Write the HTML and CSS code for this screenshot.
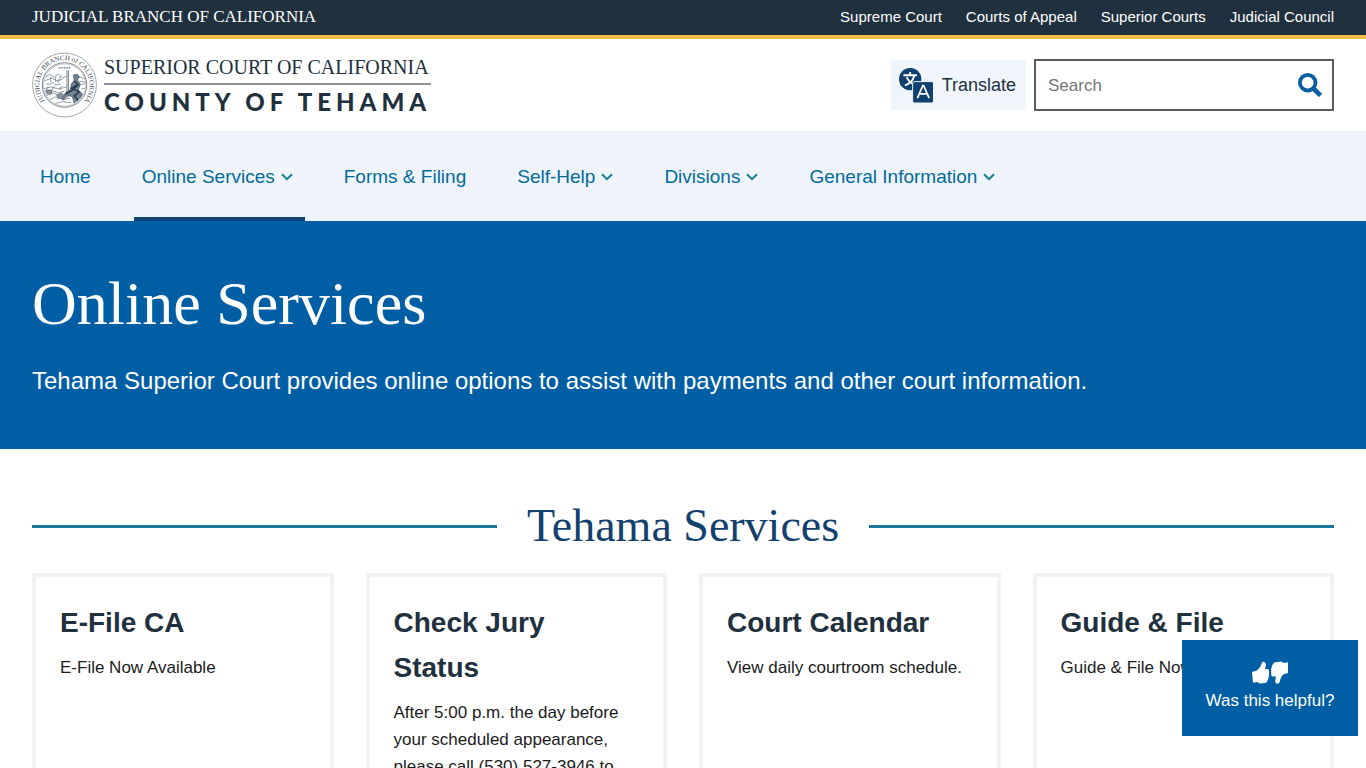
FILE: index.html
```html
<!DOCTYPE html>
<html lang="en">
<head>
<meta charset="utf-8">
<meta name="viewport" content="width=device-width, initial-scale=1">
<title>Online Services | Superior Court of California | County of Tehama</title>
<link rel="stylesheet" href="styles.css">
</head>
<body>
<div class="topbar">
  <a class="topbar-brand" href="#">JUDICIAL BRANCH OF CALIFORNIA</a>
  <nav class="topbar-links" aria-label="Branch links">
    <a href="#">Supreme Court</a>
    <a href="#">Courts of Appeal</a>
    <a href="#">Superior Courts</a>
    <a href="#">Judicial Council</a>
  </nav>
</div>

<header class="header">
  <a class="logo" href="#">
    <svg class="seal" viewBox="0 0 66 66" aria-hidden="true">
      <defs><path id="ring" d="M14.200 50.500A25.500 25.500 0 1 1 51.800 50.500"/><clipPath id="disc"><circle cx="33" cy="33" r="21"/></clipPath></defs>
      <circle cx="33" cy="33" r="32.400" fill="#fff" stroke="#88929b" stroke-width=".8"/>
      <text class="seal-text"><textPath href="#ring" startOffset="50%" text-anchor="middle">JUDICIAL BRANCH of CALIFORNIA</textPath></text>
      <circle cx="33" cy="33" r="22.600" fill="none" stroke="#5d6872" stroke-width=".8"/>
      <circle cx="33" cy="33" r="21.400" fill="none" stroke="#89939b" stroke-width=".5"/>
      <g clip-path="url(#disc)" fill="none" stroke="#60707d" stroke-width=".7">
        <path d="M27 15.500h12" stroke-dasharray="1 .8" stroke-width="1.600"/>
        <path d="M12 26l6-4 4 3 5-3 4 4 4-2M12 29l8-3 6 3 5-2M14 32h5l2-2 3 3 5-1M11 37l8-2 8 2 8-2M12 40l9-1 7 2 5-2M14 44l8-3 6 3 5-2M18 48l6-3 8 3 7-2M23 52l8-2 9 1M46 24l8 3M48 29l6 1M49 33l6-2M50 37l5-1M50 43l4-2M19 25v5M24 25v5M29 24l-3 7M16 35l-2 4M23 34l-3 4M30 34l-2 4"/>
        <path d="M35.500 18v29M37 18v27" stroke="#3d4e5e"/>
        <path d="M42 23l4-1 2 3-2 3 3 4-2 6 4 4-3 9-5 1-2-7-5-2-4 5-2-1 5-7 4-2 1-6 3-4z" fill="#758391" stroke="#30465b"/>
        <path d="M43 29l4 4-5 4 6 3-5 4 4 5M39 37l7-4M34 42l8-4" stroke="#203850" stroke-width="1.500"/>
        <path d="M15 38h5v4h-5zM25 43l5-2 2 4-5 2z" fill="#87939d"/>
      </g>
    </svg>
    <span class="logo-words">
      <span class="logo-court">SUPERIOR COURT OF CALIFORNIA</span>
      <span class="logo-county">COUNTY OF TEHAMA</span>
    </span>
  </a>
  <div class="tools">
    <button class="translate" type="button">
      <svg viewBox="0 0 36 36" aria-hidden="true">
        <circle cx="11.500" cy="11.500" r="11.500" fill="#10406f"/>
        <path d="M4.500 7.500h14M11.500 4v3.500M15.500 8.500C14.500 12.500 11 16 6 18M8 9.500c1.500 4 5 6.500 8 8" fill="none" stroke="#fff" stroke-width="1.900"/>
        <rect x="14" y="14" width="21.500" height="22" rx="2" fill="#10406f" stroke="#eff5fb" stroke-width="1"/>
        <path d="M19 31l5.500-13h.8L31 31M21 26.500h8" fill="none" stroke="#fff" stroke-width="1.800"/>
      </svg>
      <span>Translate</span>
    </button>
    <form class="search" role="search">
      <input type="search" placeholder="Search" aria-label="Search">
      <button type="submit" aria-label="Submit search">
        <svg viewBox="0 0 24 24" aria-hidden="true"><circle cx="9.700" cy="9.700" r="7.800" fill="none" stroke="#0b5ea1" stroke-width="3.800"/><path d="M15.500 15.500l7 7" stroke="#0b5ea1" stroke-width="4.600"/></svg>
      </button>
    </form>
  </div>
</header>

<nav class="mainnav" aria-label="Main">
  <a href="#">Home</a>
  <a class="current" href="#" aria-current="page">Online Services <svg viewBox="0 0 12 8" aria-hidden="true"><path d="M1 1.200l5 5 5-5"/></svg></a>
  <a href="#">Forms &amp; Filing</a>
  <a href="#">Self-Help <svg viewBox="0 0 12 8" aria-hidden="true"><path d="M1 1.200l5 5 5-5"/></svg></a>
  <a href="#">Divisions <svg viewBox="0 0 12 8" aria-hidden="true"><path d="M1 1.200l5 5 5-5"/></svg></a>
  <a href="#">General Information <svg viewBox="0 0 12 8" aria-hidden="true"><path d="M1 1.200l5 5 5-5"/></svg></a>
</nav>

<main>
  <section class="hero">
    <h1>Online Services</h1>
    <p>Tehama Superior Court provides online options to assist with payments and other court information.</p>
  </section>
  <section class="services">
    <h2>Tehama Services</h2>
    <div class="cards">
      <article class="card"><h3>E-File CA</h3><p>E-File Now Available</p></article>
      <article class="card"><h3>Check Jury Status</h3><p>After 5:00 p.m. the day before your scheduled appearance, please call (530) 527-3946 to</p></article>
      <article class="card"><h3>Court Calendar</h3><p>View daily courtroom schedule.</p></article>
      <article class="card"><h3>Guide &amp; File</h3><p>Guide &amp; File Now</p></article>
    </div>
  </section>
</main>

<button class="feedback" type="button">
  <svg viewBox="0 0 38 24" aria-hidden="true">
    <path d="M1 11l5-1.500Q10 6 11 1.500 14-.5 15 3.500L14 8h3q1.500 1 .8 3 .8 1.500 0 3 .5 1.500-.5 3 .2 2-1 2.800-.3 2-2 2.200L9 22.500 6 21l-4 .7z"/>
    <path d="M37 12l-5 1.500Q29 17 28.500 21.500 25.500 24.500 24 20.500L25 15.500h-3.500q-2-1-1-3-1-1.500 0-3-1-1.500.3-3Q20.500 4 22 3.300 22.500 1.300 24.500 1.200L30 .5 33 2l4-.7z"/>
  </svg>
  <span>Was this helpful?</span>
</button>
</body>
</html>
```
FILE: styles.css
```css
* { box-sizing: border-box; }
body {
  margin: 0;
  background: #fff;
  color: #1b1b1b;
  font: 17px/27px "Liberation Sans", Arial, sans-serif;
}
html { scrollbar-width: none; }
a { color: inherit; text-decoration: none; }
button, input { font: inherit; }
h1, h2, h3, p { margin: 0; }

.topbar {
  display: flex;
  justify-content: space-between;
  align-items: center;
  padding: 3px 32px 5px;
  background: #1f303e;
  border-bottom: 4px solid #f3bd48;
  color: #fff;
}
.topbar-brand { font: 17px/26px "Liberation Serif", serif; }
.topbar-links { display: flex; gap: 24px; font-size: 15px; }

.header {
  display: flex;
  justify-content: space-between;
  align-items: center;
  padding: 12px 32px;
}
.logo { display: flex; align-items: center; gap: 7px; color: #21303d; }
.seal { width: 65px; height: 66px; }
.seal-text { font: 7px "Liberation Serif", serif; fill: #3f4b56; }
.logo-words { display: flex; flex-direction: column; }
.logo-court {
  font: 20px/32px "Liberation Serif", serif;
  border-bottom: 2px solid #8c939a;
}
.logo-county { font: 900 24px/34px Lato, sans-serif; letter-spacing: 5px; }

.tools { display: flex; align-items: center; gap: 8px; min-height: 68px; }
.translate {
  display: flex;
  align-items: center;
  gap: 8px;
  height: 50px;
  padding: 0 10px 0 8px;
  border: 0;
  background: #eff5fb;
  color: #21303d;
  font-size: 18px;
}
.translate svg { width: 35px; height: 35px; }
.search {
  display: flex;
  align-items: center;
  width: 300px;
  height: 52px;
  border: 2px solid #5b5c5e;
}
.search input {
  flex: 1;
  min-width: 0;
  padding: 0 12px;
  border: 0;
  background: none;
  outline: 0;
}
.search input::placeholder { color: #757575; opacity: 1; }
.search button { display: flex; padding: 0 10px; border: 0; background: none; }
.search svg { width: 24px; height: 24px; }

.mainnav {
  display: flex;
  gap: 31px;
  padding: 0 32px;
  background: #eef4fa;
  color: #046b99;
  font-size: 19px;
}
.mainnav a {
  display: flex;
  align-items: center;
  gap: 6px;
  height: 90px;
  padding: 4px 12px 0 8px;
  border-bottom: 4px solid transparent;
}
.mainnav .current { border-color: #0f4275; }
.mainnav svg { width: 12px; height: 8px; margin-top: 2px; fill: none; stroke: #16808f; stroke-width: 2; }

.hero { padding: 48px 32px 50px; background: #005ea5; color: #fff; }
.hero h1 { font: 62px/68px "Liberation Serif", serif; }
.hero p { margin-top: 26px; font-size: 24px; line-height: 36px; }

.services { padding: 49px 32px; }
.services h2 {
  display: flex;
  align-items: center;
  gap: 30px;
  color: #12416f;
  font: 46px/56px "Liberation Serif", serif;
}
.services h2::before, .services h2::after {
  content: "";
  flex: 1;
  height: 3px;
  background: #1c7899;
}
.cards {
  display: grid;
  grid-template-columns: repeat(4, 1fr);
  gap: 32px;
  margin-top: 19px;
}
.card { padding: 23px 28px 23px 24px; border: 4px solid #f2f2f2; }
.card h3 { margin-bottom: 9px; color: #21303d; font-size: 28px; line-height: 45px; }

.feedback {
  position: fixed;
  right: 8px;
  bottom: 32px;
  display: flex;
  flex-direction: column;
  align-items: center;
  justify-content: center;
  gap: 2px;
  width: 176px;
  height: 96px;
  padding: 0 0 2px;
  border: 0;
  background: #005ea5;
  color: #fff;
}
.feedback svg { width: 38px; height: 24px; fill: #fff; }
```
